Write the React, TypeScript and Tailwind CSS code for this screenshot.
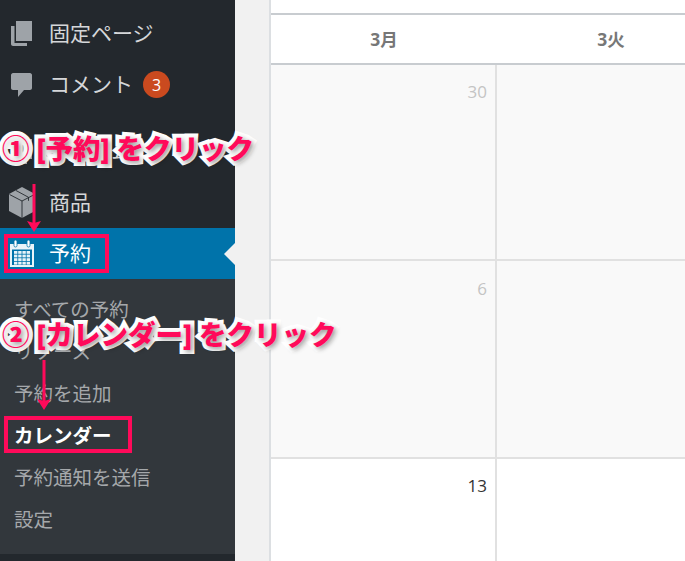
const jp = "font-['Open_Sans','Noto_Sans_CJK_JP',sans-serif]";

function PagesIcon() {
  return (
    <svg width="21" height="25" viewBox="0 0 21 25" fill="#9ea3a8">
      <rect x="5" y="0" width="16" height="20" />
      <path d="M0 5h3.5v17H16V25H2c-1 0-2-1-2-2z" />
    </svg>
  );
}

function CommentIcon() {
  return (
    <svg width="21" height="24" viewBox="0 0 21 24" fill="#9ea3a8">
      <path d="M2 0h17c1 0 2 1 2 2v13c0 1-1 2-2 2h-6l-6 7v-7H2c-1 0-2-1-2-2V2C0 1 1 0 2 0z" />
    </svg>
  );
}

function BoxIcon() {
  return (
    <svg width="26" height="31" viewBox="0 0 26 31">
      <path d="M13 0l13 7v17l-13 7-13-7V7z" fill="#9ea3a8" />
      <path d="M0.5 7.5L13 14l12.5-6.5M13 14v17M7 3.5l12.5 6.8v3.5" fill="none" stroke="#23282d" strokeWidth="0.9" />
    </svg>
  );
}

function CalendarIcon() {
  const cells = [];
  for (let y = 0; y < 4; y++) {
    for (let x = 0; x < 4; x++) {
      cells.push(<rect key={`${x}-${y}`} x={5 + x * 4.2} y={11 + y * 3.6} width="3.4" height="2.8" fill="#e8f4f9" />);
    }
  }
  return (
    <svg width="26" height="27" viewBox="0 0 26 27">
      <path d="M1 4h24v23H1z" fill="#e8f4f9" />
      <rect x="3" y="9.5" width="20" height="15.5" fill="#0073aa" />
      {cells}
      <rect x="5" y="0" width="3" height="7" rx="1.5" fill="#fff" stroke="#0073aa" strokeWidth="0.8" />
      <rect x="18" y="0" width="3" height="7" rx="1.5" fill="#fff" stroke="#0073aa" strokeWidth="0.8" />
    </svg>
  );
}

function MenuRow({ icon, label, badge, active }: { icon: React.ReactNode; label: string; badge?: string; active?: boolean }) {
  return (
    <div className={`flex h-[51px] items-center ${active ? "bg-[#0073aa] text-white" : "text-[#d5d7d9]"}`}>
      <span className="flex w-[49px] justify-center pr-[6px]">{icon}</span>
      <span className="text-[21px] leading-none">{label}</span>
      {badge && (
        <span className="ml-[10px] flex size-[27px] items-center justify-center rounded-full bg-[#ca4a1f] text-[16px] text-white">
          {badge}
        </span>
      )}
    </div>
  );
}

function Callout({ className, children }: { className: string; children: React.ReactNode }) {
  return (
    <div
      className={`absolute whitespace-nowrap text-[27.5px] leading-none font-black text-[#ff0a5a] [-webkit-text-stroke:8px_white] [paint-order:stroke_fill] [text-shadow:2px_2px_5px_rgba(0,0,0,0.45)] ${className}`}
    >
      {children}
    </div>
  );
}

function Arrow({ className, height }: { className: string; height: number }) {
  return (
    <svg className={`absolute ${className}`} width="16" height={height} viewBox={`0 0 16 ${height}`} fill="#ff0a5a">
      <rect x="6.5" y="0" width="3" height={height - 6} />
      <path d={`M1 ${height - 11}l7 2 7-2-7 11z`} />
    </svg>
  );
}

export default function App() {
  const subItems = ["すべての予約", "リソース", "予約を追加", "カレンダー", "予約通知を送信", "設定"];
  return (
    <div className={`relative flex h-[561px] w-[685px] overflow-hidden bg-[#f1f1f1] ${jp}`}>
      <aside className="h-full w-[235px] shrink-0 bg-[#23282d] pt-[8px]">
        <MenuRow icon={<PagesIcon />} label="固定ページ" />
        <MenuRow icon={<CommentIcon />} label="コメント" badge="3" />
        <div className="h-[16px]" />
        <MenuRow icon={<PagesIcon />} label="フォーム" />
        <MenuRow icon={<BoxIcon />} label="商品" />
        <div className="relative">
          <MenuRow icon={<CalendarIcon />} label="予約" active />
          <div className="absolute top-[15px] right-0 size-0 border-y-[11px] border-r-[11px] border-y-transparent border-r-[#f1f1f1]" />
        </div>
        <div className="flex h-[275px] flex-col bg-[#32373c] pt-[10px] text-[19.5px] text-[#a5a8ab]">
          {subItems.map((item) => (
            <div
              key={item}
              className={`flex h-[42px] items-center pl-[14px] ${item === "カレンダー" ? "pl-[13px] font-bold text-white" : ""}`}
            >
              {item}
            </div>
          ))}
        </div>
      </aside>

      <main className="ml-[34px] flex min-w-0 flex-1 flex-col overflow-hidden border-l-2 border-l-[#dcdfe2] bg-white pt-[13px]">
        <div className="grid h-[52px] grid-cols-[226px_228px] items-center border-y-2 border-[#c8ccd0] text-center text-[17.5px] font-bold text-[#777]">
          <div>3月</div>
          <div>3火</div>
        </div>
        <div className="flex h-[196px] border-b-2 border-[#e1e1e1] bg-[#f9f9f9]">
          <div className="w-[226px] border-r-2 border-[#e1e1e1] pt-[16px] pr-[8px] text-right text-[17px] leading-[22px] text-[#c4c4c4]">30</div>
        </div>
        <div className="flex h-[198px] border-b-2 border-[#e1e1e1] bg-[#f9f9f9]">
          <div className="w-[226px] border-r-2 border-[#e1e1e1] pt-[17px] pr-[8px] text-right text-[17px] leading-[22px] text-[#c4c4c4]">6</div>
        </div>
        <div className="flex flex-1">
          <div className="w-[226px] border-r-2 border-[#e1e1e1] pt-[16px] pr-[8px] text-right text-[17px] leading-[22px] text-[#333]">13</div>
        </div>
      </main>

      {/* annotations over the screenshot */}
      <Callout className="top-[135px] left-[2px]">① [予約] をクリック</Callout>
      <Callout className="top-[321px] left-[2px]">② [カレンダー] をクリック</Callout>
      <Arrow className="top-[184px] left-[26px]" height={48} />
      <Arrow className="top-[360px] left-[36px]" height={50} />
      <div className="absolute top-[234px] left-[4px] h-[39px] w-[105px] border-4 border-[#ff0a5a]" />
      <div className="absolute top-[416px] left-[4px] h-[37px] w-[128px] border-4 border-[#ff0a5a]" />
    </div>
  );
}
